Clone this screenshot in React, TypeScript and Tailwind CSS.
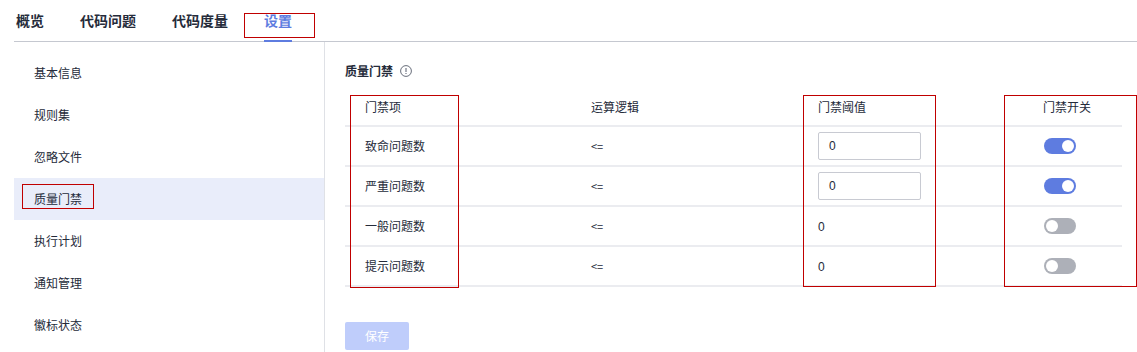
import React from 'react'

const font = { fontFamily: '"Noto Sans CJK SC", "Liberation Sans", sans-serif' }

const tabs = ['概览', '代码问题', '代码度量', '设置']
const menu = ['基本信息', '规则集', '忽略文件', '质量门禁', '执行计划', '通知管理', '徽标状态']

const rows = [
  { name: '致命问题数', input: true, on: true },
  { name: '严重问题数', input: true, on: true },
  { name: '一般问题数', input: false, on: false },
  { name: '提示问题数', input: false, on: false },
]

function Toggle({ on }: { on: boolean }) {
  return (
    <div className={on ? 'w-[32px] h-[16px] rounded-full bg-[#5e7ce0] flex items-center justify-end px-[2px]' : 'w-[32px] h-[16px] rounded-full bg-[#adb0b8] flex items-center justify-start px-[2px]'}>
      <div className="w-[12px] h-[12px] rounded-full bg-white" />
    </div>
  )
}

export default function App() {
  return (
    <div className="w-[1137px] h-[352px] bg-white text-[#252b3a] overflow-hidden" style={font}>
      {/* tabs */}
      <div className="ml-[14px] pl-[2px] h-[42px] border-b border-[#c5c8d0] flex gap-[36px]">
        {tabs.map((t, i) =>
          i === 3 ? (
            <div key={t} className="relative h-full flex items-center">
              <span className="text-[14px] font-bold text-[#5e7ce0]">{t}</span>
              <div className="absolute left-0 right-0 bottom-[-1px] h-[2px] bg-[#5e7ce0]" />
              <div className="absolute left-[-20px] top-[13px] w-[71px] h-[25px] border border-[#c00000]" />
            </div>
          ) : (
            <div key={t} className="h-full flex items-center">
              <span className="text-[14px] font-bold">{t}</span>
            </div>
          )
        )}
      </div>

      <div className="flex">
        {/* sidebar */}
        <div className="ml-[14px] w-[311px] h-[310px] border-r border-[#dfe1e6] pt-[10px]">
          {menu.map((m) => (
            <div key={m} className={m === '质量门禁' ? 'h-[42px] flex items-center pl-[20px] text-[12px] bg-[#e9edfa]' : 'h-[42px] flex items-center pl-[20px] text-[12px]'}>
              {m === '质量门禁' ? (
                <span className="relative">
                  {m}
                  <span className="absolute left-[-12px] top-[-6px] w-[72px] h-[25px] border border-[#c00000]" />
                </span>
              ) : (
                m
              )}
            </div>
          ))}
        </div>

        {/* content */}
        <div className="pl-[20px] pt-[20px] w-[797px]">
          <div className="flex items-center gap-[6px] text-[12px] font-bold h-[18px]">
            质量门禁
            <svg width="12" height="12" viewBox="0 0 12 12" className="ml-[1px]">
              <circle cx="6" cy="6" r="5.4" fill="none" stroke="#575d6c" strokeWidth="0.9" />
              <rect x="5.5" y="3" width="1" height="4" fill="#575d6c" />
              <rect x="5.5" y="8" width="1" height="1" fill="#575d6c" />
            </svg>
          </div>

          <div className="mt-[8px] relative">
            <div className="grid grid-cols-[226px_227px_225px_1fr] h-[39px] items-center text-[12px] border-b-2 border-[#ebecf0]">
              <div className="pl-[20px]">门禁项</div>
              <div className="pl-[20px]">运算逻辑</div>
              <div className="pl-[20px]">门禁阈值</div>
              <div className="pl-[20px]">门禁开关</div>
            </div>
            {rows.map((r) => (
              <div key={r.name} className="grid grid-cols-[226px_227px_225px_1fr] h-[40px] items-center text-[12px] border-b-2 border-[#ebecf0]">
                <div className="pl-[20px]">{r.name}</div>
                <div className="pl-[20px] text-[11px]">&lt;=</div>
                <div className="pl-[20px]">
                  {r.input ? (
                    <div className="w-[103px] h-[28px] border border-[#c8cad2] rounded-[2px] flex items-center pl-[10px] text-[12px]" style={{ fontFamily: '"Liberation Sans", sans-serif' }}>0</div>
                  ) : (
                    <span style={{ fontFamily: '"Liberation Sans", sans-serif' }}>0</span>
                  )}
                </div>
                <div className="pl-[21px]">
                  <Toggle on={r.on} />
                </div>
              </div>
            ))}
            {/* annotation boxes */}
            <div className="absolute left-[5px] top-[7px] w-[109px] h-[193px] border border-[#c00000]" />
            <div className="absolute left-[458px] top-[7px] w-[133px] h-[192px] border border-[#c00000]" />
            <div className="absolute left-[659px] top-[7px] w-[133px] h-[192px] border border-[#c00000]" />
          </div>

          <div className="mt-[35px]">
            <div className="w-[64px] h-[28px] rounded-[2px] bg-[#bfcdfb] text-white text-[12px] flex items-center justify-center">保存</div>
          </div>
        </div>
      </div>
    </div>
  )
}
